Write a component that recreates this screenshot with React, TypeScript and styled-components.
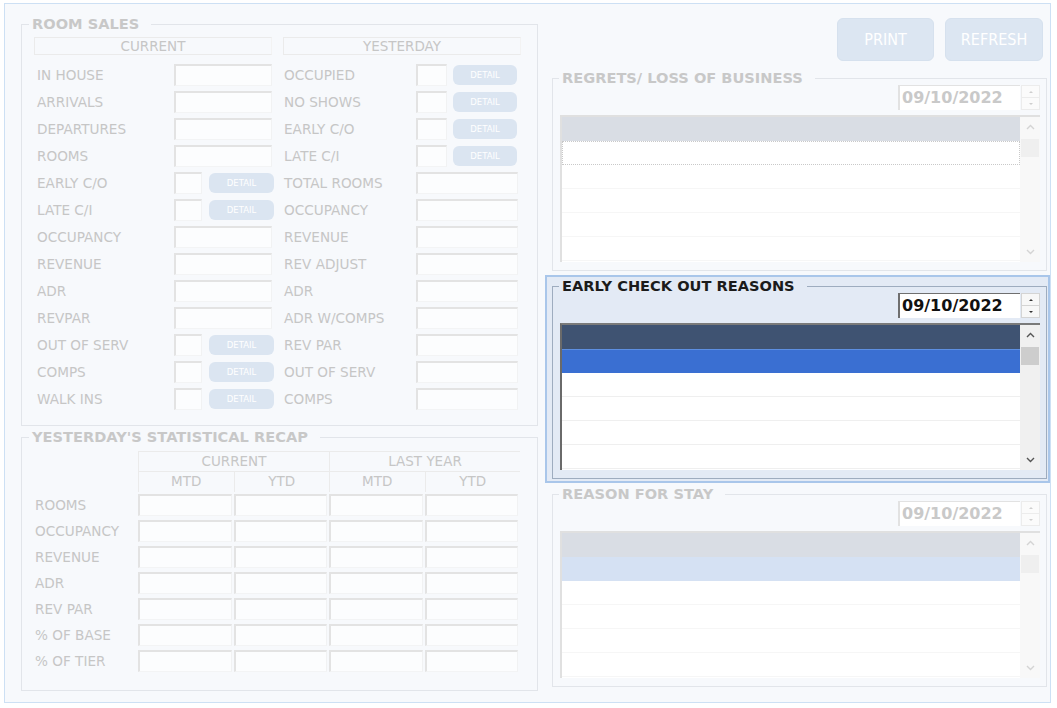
import React from "react";
import styled, { createGlobalStyle, css } from "styled-components";

const GlobalStyle = createGlobalStyle`
  html, body {
    margin: 0;
    padding: 0;
    background: #ffffff;
  }
  body {
    font-family: "DejaVu Sans", Verdana, sans-serif;
  }
`;

const DIM = "#c6c6c6";

const Frame = styled.div`
  box-sizing: border-box;
  width: 1047px;
  height: 700px;
  margin: 3px 0 0 4px;
  padding: 13px 0 0 16px;
  border: 1px solid #cde0f4;
  background: #f7f9fc;
  display: flex;
  gap: 7px;
`;

const LeftColumn = styled.div`
  width: 517px;
  display: flex;
  flex-direction: column;
  gap: 4px;
`;

const RightColumn = styled.div`
  width: 505px;
  display: flex;
  flex-direction: column;
`;

const Group = styled.fieldset<{ $h: number; $active?: boolean }>`
  box-sizing: border-box;
  margin: 0;
  padding: 0;
  min-width: 0;
  height: ${p => p.$h}px;
  border: 1px solid ${p => (p.$active ? "#9eacbf" : "#e2e5ea")};
`;

const Legend = styled.legend<{ $active?: boolean; $offset?: number }>`
  margin-left: ${p => p.$offset ?? 7}px;
  padding: 0 12px 0 3px;
  font: bold 14.6px/14px "DejaVu Sans", Verdana, sans-serif;
  color: ${p => (p.$active ? "#1b1b1b" : "#c8c8c8")};
  white-space: nowrap;
`;

/* ---------- room sales ---------- */

const SalesBody = styled.div`
  display: grid;
  grid-template-columns: 238px 238px;
  column-gap: 11px;
  padding: 6px 0 0 12px;
`;

const SalesColumn = styled.div`
  display: flex;
  flex-direction: column;
`;

const HeaderBox = styled.div`
  box-sizing: border-box;
  height: 18px;
  margin-bottom: 6px;
  border: 1px solid #ebebeb;
  border-right-color: #f3f3f3;
  text-align: center;
  font-size: 13.5px;
  line-height: 16px;
  color: ${DIM};
`;

const FieldRow = styled.div`
  display: flex;
  align-items: center;
  height: 27px;
`;

const Label = styled.span<{ $w: number; $pad: number }>`
  box-sizing: border-box;
  width: ${p => p.$w}px;
  padding-left: ${p => p.$pad}px;
  font-size: 13.6px;
  color: ${DIM};
  white-space: nowrap;
  flex: none;
`;

const Input = styled.div<{ $w?: number }>`
  box-sizing: border-box;
  width: ${p => (p.$w ? `${p.$w}px` : "calc(100% - 2px)")};
  height: 22px;
  background: #fcfdfe;
  border-top: 2px solid #e3e3e3;
  border-left: 2px solid #e3e3e3;
  border-right: 1px solid #f1f2f3;
  border-bottom: 1px solid #f3f4f5;
  flex: none;
`;

const DetailButton = styled.button<{ $gap: number; $w: number }>`
  margin-left: ${p => p.$gap}px;
  width: ${p => p.$w}px;
  height: 20px;
  padding: 0;
  border: none;
  border-radius: 6px;
  background: #dbe5f1;
  color: #ffffff;
  font: 8.5px/20px "DejaVu Sans", Verdana, sans-serif;
  flex: none;
`;

type Field = [string, "wide" | "detail"];

const leftFields: Field[] = [
  ["IN HOUSE", "wide"],
  ["ARRIVALS", "wide"],
  ["DEPARTURES", "wide"],
  ["ROOMS", "wide"],
  ["EARLY C/O", "detail"],
  ["LATE C/I", "detail"],
  ["OCCUPANCY", "wide"],
  ["REVENUE", "wide"],
  ["ADR", "wide"],
  ["REVPAR", "wide"],
  ["OUT OF SERV", "detail"],
  ["COMPS", "detail"],
  ["WALK INS", "detail"],
];

const rightFields: Field[] = [
  ["OCCUPIED", "detail"],
  ["NO SHOWS", "detail"],
  ["EARLY C/O", "detail"],
  ["LATE C/I", "detail"],
  ["TOTAL ROOMS", "wide"],
  ["OCCUPANCY", "wide"],
  ["REVENUE", "wide"],
  ["REV ADJUST", "wide"],
  ["ADR", "wide"],
  ["ADR W/COMPS", "wide"],
  ["REV PAR", "wide"],
  ["OUT OF SERV", "wide"],
  ["COMPS", "wide"],
];

interface IColumnLayout {
  labelW: number;
  pad: number;
  wide: number;
  small: number;
  gap: number;
  btn: number;
}

const SalesFields = ({ title, fields, layout }: { title: string; fields: Field[]; layout: IColumnLayout }) => (
  <SalesColumn>
    <HeaderBox>{title}</HeaderBox>
    {fields.map(([label, kind]) => (
      <FieldRow key={label}>
        <Label $w={layout.labelW} $pad={layout.pad}>{label}</Label>
        {kind === "wide" ? (
          <Input $w={layout.wide} />
        ) : (
          <>
            <Input $w={layout.small} />
            <DetailButton $gap={layout.gap} $w={layout.btn}>DETAIL</DetailButton>
          </>
        )}
      </FieldRow>
    ))}
  </SalesColumn>
);

/* ---------- statistical recap ---------- */

const RecapGrid = styled.div`
  display: grid;
  grid-template-columns: 103px repeat(4, 95.5px);
  grid-template-rows: 20px 21px repeat(7, 26px);
  align-items: center;
  padding: 7px 0 0 13px;
`;

const RecapHead = styled.div<{ $span?: number }>`
  box-sizing: border-box;
  grid-column: span ${p => p.$span ?? 1};
  align-self: stretch;
  border-top: 1px solid #ebebeb;
  border-left: 1px solid #ebebeb;
  text-align: center;
  font-size: 13.5px;
  line-height: 18px;
  color: ${DIM};
`;

const RecapLabel = styled.span`
  font-size: 13.6px;
  color: ${DIM};
  white-space: nowrap;
`;

const Blank = styled.div``;

const recapRows = ["ROOMS", "OCCUPANCY", "REVENUE", "ADR", "REV PAR", "% OF BASE", "% OF TIER"];

/* ---------- right side ---------- */

const ButtonBar = styled.div`
  display: flex;
  justify-content: flex-end;
  gap: 11px;
  height: 43px;
  margin: 1px 7px 6px 0;
`;

const BigButton = styled.button<{ $w: number }>`
  width: ${p => p.$w}px;
  height: 43px;
  padding: 0;
  border: 1px solid #d6e1ee;
  border-radius: 6px;
  background: #dce6f2;
  color: #ffffff;
  font-family: "Liberation Sans Narrow", "DejaVu Sans Condensed", "DejaVu Sans", sans-serif;
  font-size: 16px;
`;

const Panel = styled.div<{ $active?: boolean }>`
  box-sizing: border-box;
  height: 208px;
  padding: 2px 1px 2px 5px;
  border: 2px solid ${p => (p.$active ? "#a9c6ea" : "transparent")};
  background: ${p => (p.$active ? "#e3eaf5" : "transparent")};
`;

const DateRow = styled.div`
  display: flex;
  justify-content: flex-end;
  height: 25px;
  margin-right: 6px;
`;

const DateBox = styled.div<{ $active?: boolean }>`
  box-sizing: border-box;
  width: 122px;
  height: 25px;
  padding-left: 2px;
  background: #ffffff;
  border-top: 1px solid ${p => (p.$active ? "#6f6f6f" : "#e2e2e2")};
  border-left: 2px solid ${p => (p.$active ? "#6f6f6f" : "#e2e2e2")};
  font: bold 16px/24px "DejaVu Sans", Verdana, sans-serif;
  color: ${p => (p.$active ? "#111111" : "#c9c9c9")};
`;

const Spinner = styled.div`
  width: 19px;
  margin-left: 1px;
  display: flex;
  flex-direction: column;
`;

const SpinHalf = styled.div<{ $active?: boolean }>`
  flex: 1;
  display: flex;
  align-items: center;
  justify-content: center;
  background: ${p => (p.$active ? "#f7f7f7" : "#fbfbfb")};
  border: 1px solid ${p => (p.$active ? "#d4d4d4" : "#ececec")};
  & + & {
    border-top: none;
  }
`;

const SpinArrow = styled.span<{ $dir: "up" | "down"; $active?: boolean }>`
  width: 0;
  height: 0;
  border-left: 2px solid transparent;
  border-right: 2px solid transparent;
  ${p =>
    p.$dir === "up"
      ? css`border-bottom: 2px solid ${p.$active ? "#333" : "#cfcfcf"};`
      : css`border-top: 2px solid ${p.$active ? "#333" : "#cfcfcf"};`}
`;

const DataGrid = styled.div<{ $active?: boolean }>`
  box-sizing: border-box;
  height: 147px;
  margin: 5px 6px 0 7px;
  display: flex;
  overflow: hidden;
  background: #ffffff;
  border-top: 2px solid ${p => (p.$active ? "#7a7a7a" : "#e0e0e0")};
  border-left: 2px solid ${p => (p.$active ? "#6a6a6a" : "#e0e0e0")};
`;

const ListArea = styled.div`
  flex: 1;
  display: flex;
  flex-direction: column;
`;

type RowKind = "darkHead" | "lightHead" | "selected" | "softSelected" | "focus" | "plain";

const rowColors: Record<RowKind, string> = {
  darkHead: "#3f5372",
  lightHead: "#d9dde4",
  selected: "#3a6fd2",
  softSelected: "#d5e1f3",
  focus: "#ffffff",
  plain: "#ffffff",
};

const GridRow = styled.div<{ $kind: RowKind; $active?: boolean }>`
  box-sizing: border-box;
  flex: none;
  height: 24px;
  background: ${p => rowColors[p.$kind]};
  ${p => p.$kind === "plain" && css`border-bottom: 1px solid ${p.$active ? "#efefef" : "#f6f6f6"};`}
  ${p => p.$kind === "selected" && css`border-top: 1px solid #5d8fe2;`}
  ${p => p.$kind === "focus" && css`border: 1px dotted #c9c9c9;`}
`;

const ScrollBar = styled.div<{ $active?: boolean }>`
  width: 20px;
  flex: none;
  display: flex;
  flex-direction: column;
  background: ${p => (p.$active ? "#f0f0f0" : "#f8f8f8")};
`;

const ScrollArrow = styled.div`
  height: 20px;
  display: flex;
  align-items: center;
  justify-content: center;
  flex: none;
`;

const ScrollThumb = styled.div<{ $active?: boolean }>`
  height: 18px;
  margin: 2px 1px 0;
  background: ${p => (p.$active ? "#cdcdcd" : "#efefef")};
`;

const ScrollSpace = styled.div`
  flex: 1;
`;

const Chevron = ({ dir, color }: { dir: "up" | "down"; color: string }) => (
  <svg width="9" height="6" viewBox="0 0 9 6">
    <polyline
      points={dir === "up" ? "1,5 4.5,1.5 8,5" : "1,1 4.5,4.5 8,1"}
      fill="none"
      stroke={color}
      strokeWidth="1.4"
    />
  </svg>
);

interface IListPanelProps {
  title: string;
  active?: boolean;
  secondRow: RowKind;
  head: RowKind;
}

const ListPanel = ({ title, active, secondRow, head }: IListPanelProps) => {
  const arrow = active ? "#555555" : "#d4d4d4";
  return (
    <Panel $active={active}>
      <Group $h={200} $active={active}>
        <Legend $active={active} $offset={6}>{title}</Legend>
        <DateRow>
          <DateBox $active={active}>09/10/2022</DateBox>
          <Spinner>
            <SpinHalf $active={active}><SpinArrow $dir="up" $active={active} /></SpinHalf>
            <SpinHalf $active={active}><SpinArrow $dir="down" $active={active} /></SpinHalf>
          </Spinner>
        </DateRow>
        <DataGrid $active={active}>
          <ListArea>
            <GridRow $kind={head} />
            <GridRow $kind={secondRow} />
            <GridRow $kind="plain" $active={active} />
            <GridRow $kind="plain" $active={active} />
            <GridRow $kind="plain" $active={active} />
            <GridRow $kind="plain" $active={active} />
          </ListArea>
          <ScrollBar $active={active}>
            <ScrollArrow><Chevron dir="up" color={arrow} /></ScrollArrow>
            <ScrollThumb $active={active} />
            <ScrollSpace />
            <ScrollArrow><Chevron dir="down" color={arrow} /></ScrollArrow>
          </ScrollBar>
        </DataGrid>
      </Group>
    </Panel>
  );
};

const App = () => (
  <>
    <GlobalStyle />
    <Frame>
      <LeftColumn>
        <Group $h={409}>
          <Legend>ROOM SALES</Legend>
          <SalesBody>
            <SalesFields
              title="CURRENT"
              fields={leftFields}
              layout={{ labelW: 140, pad: 3, wide: 98, small: 28, gap: 7, btn: 65 }}
            />
            <SalesFields
              title="YESTERDAY"
              fields={rightFields}
              layout={{ labelW: 133, pad: 1, wide: 102, small: 31, gap: 6, btn: 64 }}
            />
          </SalesBody>
        </Group>
        <Group $h={261}>
          <Legend>YESTERDAY'S STATISTICAL RECAP</Legend>
          <RecapGrid>
            <Blank />
            <RecapHead $span={2}>CURRENT</RecapHead>
            <RecapHead $span={2}>LAST YEAR</RecapHead>
            <Blank />
            <RecapHead>MTD</RecapHead>
            <RecapHead>YTD</RecapHead>
            <RecapHead>MTD</RecapHead>
            <RecapHead>YTD</RecapHead>
            {recapRows.map(label => (
              <React.Fragment key={label}>
                <RecapLabel>{label}</RecapLabel>
                <Input />
                <Input />
                <Input />
                <Input />
              </React.Fragment>
            ))}
          </RecapGrid>
        </Group>
      </LeftColumn>
      <RightColumn>
        <ButtonBar>
          <BigButton $w={97}>PRINT</BigButton>
          <BigButton $w={98}>REFRESH</BigButton>
        </ButtonBar>
        <ListPanel title="REGRETS/ LOSS OF BUSINESS" head="lightHead" secondRow="focus" />
        <ListPanel title="EARLY CHECK OUT REASONS" head="darkHead" secondRow="selected" active />
        <ListPanel title="REASON FOR STAY" head="lightHead" secondRow="softSelected" />
      </RightColumn>
    </Frame>
  </>
);

export default App;
